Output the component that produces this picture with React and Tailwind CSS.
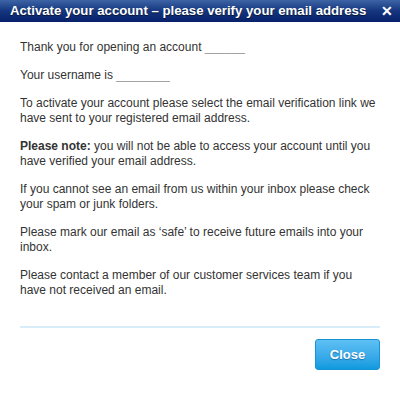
export default function App() {
  return (
    <div className="w-[400px] h-[414px] bg-white font-['Liberation_Sans',Arial,sans-serif]">
      <div className="h-[22px] flex items-center justify-between pl-[10px] pr-[7px] bg-gradient-to-b from-[#3d64a5] via-[#15367f] to-[#08206c]">
        <h1 className="text-[13.2px] font-bold text-white leading-none whitespace-nowrap [text-shadow:0_1px_1px_rgba(0,0,0,0.6)]">
          Activate your account – please verify your email address
        </h1>
        <span className="text-white text-[14px] font-bold leading-none">✕</span>
      </div>

      <div className="px-5 pt-[18px] text-[12px] leading-[15px] text-[#333]">
        <p className="mb-[13px]">
          Thank you for opening an account <span className="text-[#999]">______</span>
        </p>
        <p className="mb-[13px]">
          Your username is <span className="text-[#999]">________</span>
        </p>
        <p className="mb-[13px]">
          To activate your account please select the email verification link we have sent to your registered email address.
        </p>
        <p className="mb-[13px]">
          <strong>Please note:</strong> you will not be able to access your account until you have verified your email address.
        </p>
        <p className="mb-[13px]">
          If you cannot see an email from us within your inbox please check your spam or junk folders.
        </p>
        <p className="mb-[13px]">
          Please mark our email as ‘safe’ to receive future emails into your inbox.
        </p>
        <p>
          Please contact a member of our customer services team if you have not received an email.
        </p>

        <div className="mt-[28px] border-t-2 border-[#d8edf8]" />

        <div className="flex justify-end pt-[11px]">
          <button className="w-[65px] h-[31px] rounded-[3px] border border-[#1a93d4] bg-gradient-to-b from-[#5dc0f4] to-[#0a9ae0] text-white text-[13px] font-bold [text-shadow:0_1px_1px_rgba(0,60,120,0.5)]">
            Close
          </button>
        </div>
      </div>
    </div>
  );
}
